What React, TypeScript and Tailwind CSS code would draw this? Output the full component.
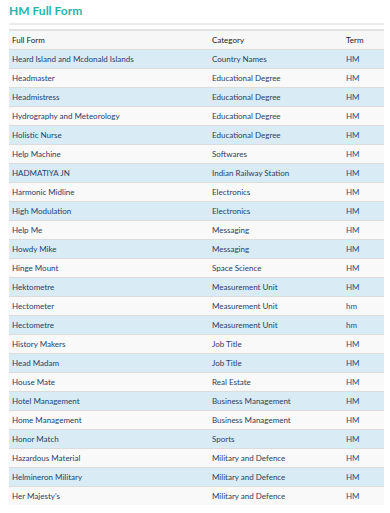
const rows: [string, string, string][] = [
  ["Heard Island and Mcdonald Islands", "Country Names", "HM"],
  ["Headmaster", "Educational Degree", "HM"],
  ["Headmistress", "Educational Degree", "HM"],
  ["Hydrography and Meteorology", "Educational Degree", "HM"],
  ["Holistic Nurse", "Educational Degree", "HM"],
  ["Help Machine", "Softwares", "HM"],
  ["HADMATIYA JN", "Indian Railway Station", "HM"],
  ["Harmonic Midline", "Electronics", "HM"],
  ["High Modulation", "Electronics", "HM"],
  ["Help Me", "Messaging", "HM"],
  ["Howdy Mike", "Messaging", "HM"],
  ["Hinge Mount", "Space Science", "HM"],
  ["Hektometre", "Measurement Unit", "HM"],
  ["Hectometer", "Measurement Unit", "hm"],
  ["Hectometre", "Measurement Unit", "hm"],
  ["History Makers", "Job Title", "HM"],
  ["Head Madam", "Job Title", "HM"],
  ["House Mate", "Real Estate", "HM"],
  ["Hotel Management", "Business Management", "HM"],
  ["Home Management", "Business Management", "HM"],
  ["Honor Match", "Sports", "HM"],
  ["Hazardous Material", "Military and Defence", "HM"],
  ["Helmineron Military", "Military and Defence", "HM"],
  ["Her Majesty's", "Military and Defence", "HM"],
];

export default function App() {
  return (
    <div className="w-[390px] h-[513px] bg-white overflow-hidden" style={{ fontFamily: "Lato, 'Liberation Sans', sans-serif" }}>
      <div className="pl-[9px] pr-[6px] pt-[4px]">
        <h2 className="text-[12px] font-bold text-[#27b5b0] leading-[14px]">HM Full Form</h2>
        <div className="mt-[5px] h-[2px] bg-[#ececec]" />
        <table className="mt-[4px] w-full border-collapse text-[8px] leading-[10px]">
          <thead>
            <tr className="bg-[#f7f7f7] border-t-2 border-[#e2e2e2]">
              <th className="h-[19px] pl-[3px] text-left font-normal text-[#222]">Full Form</th>
              <th className="h-[19px] w-[134px] text-left font-normal text-[#222]">Category</th>
              <th className="h-[19px] w-[38px] text-left font-normal text-[#222]">Term</th>
            </tr>
          </thead>
          <tbody>
            {rows.map((r, i) => (
              <tr key={i} className={`border-t border-[#dcdcdc] ${i % 2 === 0 ? "bg-[#d9ebf5]" : "bg-[#f9f9f9]"}`}>
                <td className="h-[19px] pl-[3px] text-[#1d3f6e]">{r[0]}</td>
                <td className="h-[19px] text-[#2c3e62]">{r[1]}</td>
                <td className="h-[19px] text-[#2d4d82]">{r[2]}</td>
              </tr>
            ))}
          </tbody>
        </table>
      </div>
    </div>
  );
}
